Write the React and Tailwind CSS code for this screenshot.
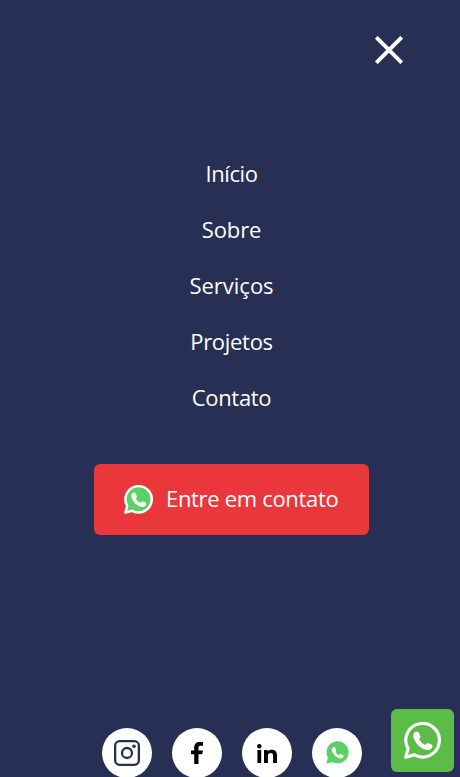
const BUBBLE = 'M1.3 26.7 L3.1 20.2 A12.7 12.7 0 1 1 7.9 24.9 Z';
const PHONE =
  'M7 10.4 Q6.9 8 8.8 7.3 Q10.9 6.8 11.5 8.6 L12.4 10.9 Q12.6 12 11.4 13.3 Q13.2 16.3 16.1 17.4 Q17.3 15.7 18.5 16 L21.1 17.2 Q21.9 17.9 21.3 19.3 Q20 21.6 17.4 21.2 Q11 20 7.8 13.4 Q7 11.7 7 10.4 Z';

function WhatsApp({ className, bubble, outline, strokeWidth = 2.4 }) {
  return (
    <svg viewBox="0 0 28 28" className={className} aria-hidden="true">
      <path d={BUBBLE} fill={bubble} stroke={outline} strokeWidth={strokeWidth} strokeLinejoin="round" />
      <path d={PHONE} fill="#fff" />
    </svg>
  );
}

function Instagram() {
  return (
    <svg viewBox="0 0 26 26" className="size-[26px]" fill="none" stroke="#272f54" strokeWidth="2.3" aria-hidden="true">
      <rect x="1.15" y="1.15" width="23.7" height="23.7" rx="4.5" />
      <circle cx="13" cy="13" r="5" />
      <circle cx="20" cy="6.2" r="1.8" fill="#272f54" stroke="none" />
    </svg>
  );
}

function Facebook() {
  return (
    <svg viewBox="0 0 12 22" className="h-[22px] w-3" aria-hidden="true">
      <path d="M3.2 22V12.3H0V8.5H3.2V5.6C3.2 2 5.3 0 8.6 0H12V3.8H9.6C8.1 3.8 7.5 4.6 7.5 5.8V8.5H11.9L11.2 12.3H7.5V22Z" />
    </svg>
  );
}

function LinkedIn() {
  return (
    <svg viewBox="0 0 20 19" className="h-[19px] w-5" aria-hidden="true">
      <circle cx="2.3" cy="2.2" r="2.2" />
      <path d="M.4 6H4.2V19H.4ZM7 6H10.7V7.6C11.5 6.3 12.8 5.7 14.5 5.7C18.4 5.7 20 7.8 20 11.3V19H16.1V12C16.1 10.1 15.5 9.1 13.8 9.1C11.9 9.1 10.9 10.2 10.9 12.2V19H7Z" />
    </svg>
  );
}

const links = [
  { label: 'Início', spacing: 'tracking-[-0.4px]' },
  { label: 'Sobre', spacing: 'tracking-[-0.1px]' },
  { label: 'Serviços', spacing: 'tracking-[0px]' },
  { label: 'Projetos', spacing: 'tracking-[-0.3px]' },
  { label: 'Contato', spacing: 'tracking-[-0.3px]' },
];

function Social({ children }) {
  return <a className="flex size-[50px] items-center justify-center rounded-full bg-white">{children}</a>;
}

export default function App() {
  return (
    <div className="relative flex h-[777px] w-[460px] flex-col overflow-hidden bg-[#272f54] font-['Open_Sans','Noto_Sans',sans-serif] text-[22px] text-white">
      <header className="flex h-[145px] shrink-0 justify-end pt-9 pr-[57px]">
        <svg viewBox="0 0 28 28" className="size-7" stroke="#fff" strokeWidth="3.9" aria-hidden="true">
          <path d="M1.3 1.3 L26.7 26.7 M26.7 1.3 L1.3 26.7" />
        </svg>
      </header>

      <nav className="flex flex-col items-center pl-[3px]">
        {links.map(({ label, spacing }) => (
          <a key={label} className={`flex h-14 items-center leading-[56px] ${spacing}`}>
            {label}
          </a>
        ))}
      </nav>

      <a className="mt-[39px] ml-[94px] flex h-[71px] w-[275px] shrink-0 items-center rounded-md bg-[#e9373b] pl-[30px]">
        <WhatsApp className="mb-px size-[29px] shrink-0" bubble="#5bd066" outline="#fff" />
        <span className="mb-[2px] ml-[13px] whitespace-nowrap tracking-[-0.32px]">Entre em contato</span>
      </a>

      <div className="mt-[193px] ml-[102px] flex shrink-0 gap-5">
        <Social><Instagram /></Social>
        <Social><Facebook /></Social>
        <Social><LinkedIn /></Social>
        <Social><WhatsApp className="mb-px size-[23px]" bubble="#5bd066" outline="#5bd066" strokeWidth={1.5} /></Social>
      </div>

      <a className="absolute top-[709px] left-[391px] flex size-[63px] items-center justify-center rounded-md bg-[#5bbc48]">
        <WhatsApp className="size-[37px]" bubble="none" outline="#fff" />
      </a>
    </div>
  );
}
